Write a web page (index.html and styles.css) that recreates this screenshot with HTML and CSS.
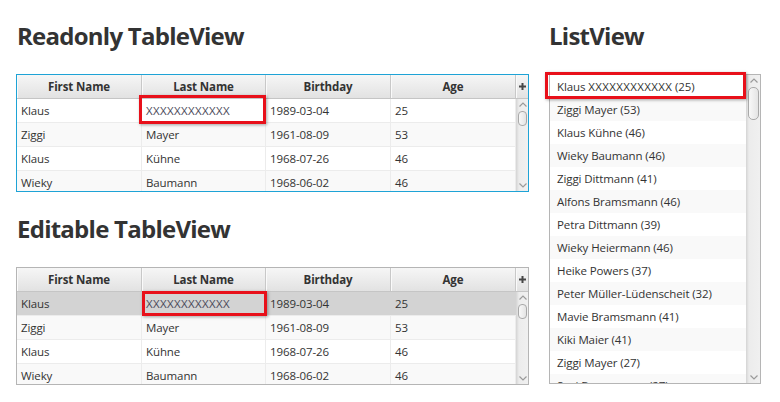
FILE: index.html
```html
<!DOCTYPE html>
<html lang="de">
<head>
<meta charset="utf-8">
<title>TableView / ListView</title>
<link rel="stylesheet" href="styles.css">
</head>
<body>
<div class="page">
  <div class="col-left">
    <h1 class="title title--shift">Readonly TableView</h1>
    <div class="table table--focused">
      <div class="thead">
        <div class="th">First Name</div>
        <div class="th">Last Name</div>
        <div class="th">Birthday</div>
        <div class="th">Age</div>
        <div class="th th--corner"><svg width="7" height="7" viewBox="0 0 7 7"><path d="M2.5 0h2v2.5H7v2H4.5V7h-2V4.5H0v-2h2.5z" fill="#474747"/></svg></div>
      </div>
      <div class="tbody-wrap">
        <div class="tbody">
          <div class="tr"><div class="td">Klaus</div><div class="td td--edit">XXXXXXXXXXXX</div><div class="td">1989-03-04</div><div class="td">25</div></div>
          <div class="tr"><div class="td">Ziggi</div><div class="td">Mayer</div><div class="td">1961-08-09</div><div class="td">53</div></div>
          <div class="tr"><div class="td">Klaus</div><div class="td">Kühne</div><div class="td">1968-07-26</div><div class="td">46</div></div>
          <div class="tr"><div class="td">Wieky</div><div class="td">Baumann</div><div class="td">1968-06-02</div><div class="td">46</div></div>
        </div>
        <div class="vscroll">
          <svg class="arrow" width="8" height="5" viewBox="0 0 8 5"><path d="M0.5 4.5L4 1l3.5 3.5" fill="none" stroke="#9a9a9a" stroke-width="1.2"/></svg>
          <div class="thumb"></div>
          <div class="spacer"></div>
          <svg class="arrow" width="8" height="5" viewBox="0 0 8 5"><path d="M0.5 0.5L4 4l3.5-3.5" fill="none" stroke="#9a9a9a" stroke-width="1.2"/></svg>
        </div>
      </div>
      <div class="mark mark--ro"></div>
    </div>

    <h1 class="title title--shift title--second">Editable TableView</h1>
    <div class="table">
      <div class="thead">
        <div class="th">First Name</div>
        <div class="th">Last Name</div>
        <div class="th">Birthday</div>
        <div class="th">Age</div>
        <div class="th th--corner"><svg width="7" height="7" viewBox="0 0 7 7"><path d="M2.5 0h2v2.5H7v2H4.5V7h-2V4.5H0v-2h2.5z" fill="#474747"/></svg></div>
      </div>
      <div class="tbody-wrap">
        <div class="tbody">
          <div class="tr tr--selected"><div class="td">Klaus</div><div class="td td--edit">XXXXXXXXXXXX</div><div class="td">1989-03-04</div><div class="td">25</div></div>
          <div class="tr"><div class="td">Ziggi</div><div class="td">Mayer</div><div class="td">1961-08-09</div><div class="td">53</div></div>
          <div class="tr"><div class="td">Klaus</div><div class="td">Kühne</div><div class="td">1968-07-26</div><div class="td">46</div></div>
          <div class="tr"><div class="td">Wieky</div><div class="td">Baumann</div><div class="td">1968-06-02</div><div class="td">46</div></div>
        </div>
        <div class="vscroll">
          <svg class="arrow" width="8" height="5" viewBox="0 0 8 5"><path d="M0.5 4.5L4 1l3.5 3.5" fill="none" stroke="#9a9a9a" stroke-width="1.2"/></svg>
          <div class="thumb"></div>
          <div class="spacer"></div>
          <svg class="arrow" width="8" height="5" viewBox="0 0 8 5"><path d="M0.5 0.5L4 4l3.5-3.5" fill="none" stroke="#9a9a9a" stroke-width="1.2"/></svg>
        </div>
      </div>
      <div class="mark mark--ed"></div>
    </div>
  </div>

  <div class="col-right">
    <h1 class="title">ListView</h1>
    <div class="list">
      <div class="list-body">
        <div class="li">Klaus <span class="xs">XXXXXXXXXXXX</span> (25)</div>
        <div class="li">Ziggi Mayer (53)</div>
        <div class="li">Klaus Kühne (46)</div>
        <div class="li">Wieky Baumann (46)</div>
        <div class="li">Ziggi Dittmann (41)</div>
        <div class="li">Alfons Bramsmann (46)</div>
        <div class="li">Petra Dittmann (39)</div>
        <div class="li">Wieky Heiermann (46)</div>
        <div class="li">Heike Powers (37)</div>
        <div class="li">Peter Müller-Lüdenscheit (32)</div>
        <div class="li">Mavie Bramsmann (41)</div>
        <div class="li">Kiki Maier (41)</div>
        <div class="li">Ziggi Mayer (27)</div>
        <div class="li">Susi Bramsmann (27)</div>
      </div>
      <div class="vscroll vscroll--list">
        <svg class="arrow" width="8" height="5" viewBox="0 0 8 5"><path d="M0.5 4.5L4 1l3.5 3.5" fill="none" stroke="#9a9a9a" stroke-width="1.2"/></svg>
        <div class="thumb"></div>
        <div class="spacer"></div>
        <svg class="arrow" width="8" height="5" viewBox="0 0 8 5"><path d="M0.5 0.5L4 4l3.5-3.5" fill="none" stroke="#9a9a9a" stroke-width="1.2"/></svg>
      </div>
      <div class="mark mark--list"></div>
    </div>
  </div>
</div>
</body>
</html>
```

FILE: styles.css
```css
* { box-sizing: border-box; }

html, body {
  margin: 0;
  padding: 0;
  background: #ffffff;
}

body {
  width: 780px;
  height: 402px;
  overflow: hidden;
  font-family: "Open Sans", "Noto Sans", "Liberation Sans", sans-serif;
  font-size: 11.5px;
  letter-spacing: -0.1px;
  color: #333333;
}

.page {
  display: flex;
  gap: 20px;
  padding: 22px 0 0 16px;
}

.col-left {
  width: 513px;
  display: flex;
  flex-direction: column;
}

.col-right {
  width: 212px;
  display: flex;
  flex-direction: column;
}

.title {
  margin: 0 0 24px 0;
  font-size: 24px;
  line-height: 28px;
  font-weight: 700;
  color: #333333;
  letter-spacing: -0.75px;
}

.title--shift {
  padding-left: 1px;
}

.title--second {
  margin-top: 23px;
}

/* ---------- table ---------- */
.table {
  position: relative;
  height: 118px;
  border: 1px solid #b5b5b5;
  background: #ffffff;
  display: flex;
  flex-direction: column;
}

.table--focused {
  border-color: #1ea3d6;
  box-shadow: inset 0 0 0 1px #9fd6ec;
}

.thead {
  display: grid;
  grid-template-columns: 125px 124px 125px 125px 1fr;
  height: 24px;
  border-bottom: 1px solid #c5c5c5;
  background: linear-gradient(#f6f6f6, #e2e2e2);
  flex: none;
}

.th {
  display: flex;
  align-items: center;
  justify-content: center;
  font-weight: 700;
  border-right: 1px solid #c8c8c8;
  box-shadow: inset 1px 0 0 #fafafa;
}

.th--corner {
  border-right: none;
}

.tbody-wrap {
  flex: 1;
  display: flex;
  min-height: 0;
}

.tbody {
  flex: 1;
  overflow: hidden;
}

.tr {
  display: grid;
  grid-template-columns: 125px 124px 125px 125px;
  height: 24px;
  border-bottom: 1px solid #ececec;
  background: #ffffff;
}

.tr:nth-child(even) {
  background: #f9f9f9;
}

.tr--selected,
.tr--selected:nth-child(even) {
  background: #d3d3d3;
}

.td {
  display: flex;
  align-items: center;
  padding-left: 4px;
  border-right: 1px solid #ececec;
  white-space: nowrap;
  overflow: hidden;
}

.tr--selected .td {
  border-right-color: #d3d3d3;
}

.td--edit {
  color: #4a4a5a;
  letter-spacing: 0.35px;
}

.xs {
  letter-spacing: 0.35px;
}

/* ---------- scrollbar ---------- */
.vscroll {
  width: 12px;
  flex: none;
  display: flex;
  flex-direction: column;
  align-items: center;
  background: linear-gradient(90deg, #dcdcdc, #ececec 2px, #f0f0f0);
  border-left: 1px solid #d8d8d8;
  padding: 3px 0 3px;
}

.vscroll--list {
  width: 14px;
}

.arrow {
  flex: none;
  display: block;
}

.thumb {
  flex: none;
  width: 9px;
  height: 15px;
  margin-top: 4px;
  border: 1px solid #a9a9a9;
  border-radius: 4px;
  background: linear-gradient(90deg, #f8f8f8, #e4e4e4);
}

.vscroll--list .thumb {
  width: 11px;
  height: 33px;
  margin-top: 4px;
  border-radius: 5px;
}

.spacer {
  flex: 1;
}

/* ---------- list ---------- */
.list {
  position: relative;
  height: 310px;
  border: 1px solid #b5b5b5;
  display: flex;
  background: #ffffff;
}

.list-body {
  flex: 1;
  overflow: hidden;
}

.li {
  height: 23px;
  display: flex;
  align-items: center;
  padding-left: 7px;
  white-space: pre;
  background: #ffffff;
}

.li:nth-child(even) {
  background: #f9f9f9;
}

/* ---------- red annotation frames ---------- */
.mark {
  position: absolute;
  border: 3px solid #e8101a;
  box-shadow: 1px 1px 3px rgba(0, 0, 0, 0.35);
  pointer-events: none;
}

.mark--ro {
  left: 122px;
  top: 20px;
  width: 127px;
  height: 29px;
}

.mark--ed {
  left: 125px;
  top: 23px;
  width: 125px;
  height: 25px;
}

.mark--list {
  left: -5px;
  top: -3px;
  width: 201px;
  height: 27px;
}
```
